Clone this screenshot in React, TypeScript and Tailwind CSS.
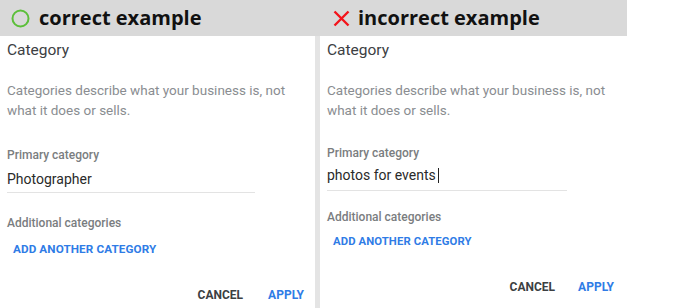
import React from 'react'

type PanelProps = {
  good: boolean
  value: string
  width: string
}

function Header({ good }: { good: boolean }) {
  return (
    <div className="flex h-[36px] items-center bg-[#d9d9d9] pl-[11px]">
      {good ? (
        <svg width="19" height="19" viewBox="0 0 19 19" className="shrink-0">
          <circle cx="9.5" cy="9.5" r="8" fill="none" stroke="#5cbf3a" strokeWidth="2" />
        </svg>
      ) : (
        <svg width="17" height="17" viewBox="0 0 17 17" className="ml-[2px] shrink-0">
          <path d="M1.5 1.5 L15.5 15.5 M15.5 1.5 L1.5 15.5" stroke="#f3141b" strokeWidth="2.4" />
        </svg>
      )}
      <span
        className={`${good ? 'ml-[9px]' : 'ml-[8px]'} text-[20px] leading-none font-bold text-[#111]`}
        style={{ fontFamily: '"Open Sans", sans-serif' }}
      >
        {good ? 'correct example' : 'incorrect example'}
      </span>
    </div>
  )
}

function Panel({ good, value, width }: PanelProps) {
  return (
    <div className={`flex ${width} flex-col`}>
      <Header good={good} />
      <div className="flex flex-1 flex-col pl-[7px]" style={{ fontFamily: 'Roboto, sans-serif' }}>
        <div className="mt-[4px] text-[15.5px] leading-[20px] text-[#3c4043]">Category</div>
        <div className="mt-[20px] text-[13.5px] leading-[20px] text-[#8a8d91]">
          Categories describe what your business is, not
          <br />
          what it does or sells.
        </div>
        <div
          className={`${good ? 'mt-[27px]' : 'mt-[25px]'} text-[12px] leading-[16px] font-medium text-[#7a7d80]`}
        >
          Primary category
        </div>
        <div
          className={`${good ? 'mt-[6px] w-[248px] pb-[3px]' : 'mt-[4px] w-[240px] pb-[5px]'} flex items-center border-b border-[#e3e3e3] text-[14px] leading-[20px] text-[#2a2a2a]`}
        >
          {value}
          {!good && <span className="ml-[2px] inline-block h-[15px] w-[1px] bg-[#222]" />}
        </div>
        <div
          className={`${good ? 'mt-[22px]' : 'mt-[18px]'} text-[12px] leading-[16px] font-medium text-[#7a7d80]`}
        >
          Additional categories
        </div>
        <div
          className={`${good ? 'mt-[10px] text-[11.7px]' : 'mt-[9px] text-[11.3px]'} pl-[6px] leading-[16px] font-bold tracking-[0.1px] text-[#2f7ce6]`}
        >
          ADD ANOTHER CATEGORY
        </div>
        <div
          className={`${good ? 'mt-[30px] pr-[11px] gap-[25px]' : 'mt-[29px] pr-[13px] gap-[23px]'} flex justify-end text-[12px] leading-[16px] font-bold`}
        >
          <span className="text-[#3c3f42]">CANCEL</span>
          <span className="text-[#2f7ce6]">APPLY</span>
        </div>
      </div>
    </div>
  )
}

export default function App() {
  return (
    <div className="flex h-[308px] w-[675px] overflow-hidden bg-white">
      <Panel good value="Photographer" width="w-[315px]" />
      <div className="flex w-[5px] flex-col">
        <div className="h-[36px] bg-[#d9d9d9]" />
        <div className="flex-1 bg-[#e4e4e4]" />
      </div>
      <Panel good={false} value="photos for events" width="w-[307px]" />
    </div>
  )
}
